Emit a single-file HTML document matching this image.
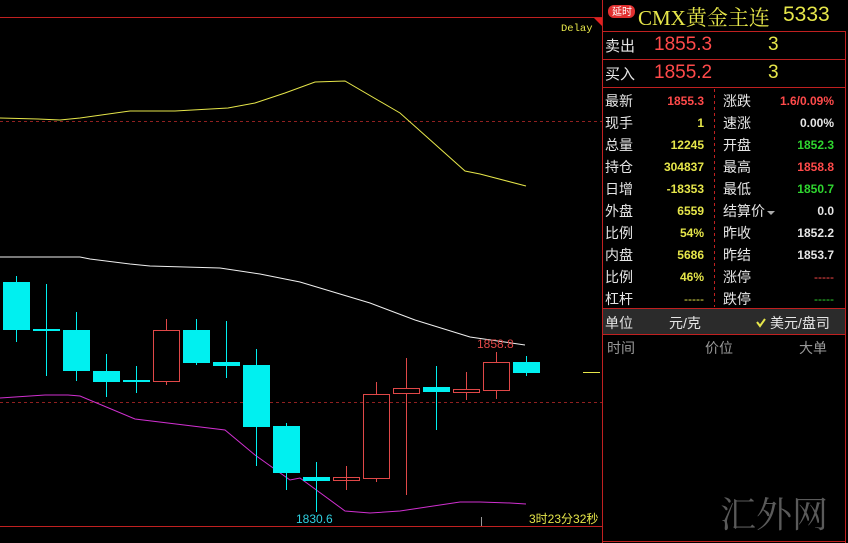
<!DOCTYPE html>
<html><head><meta charset="utf-8"><style>
body{margin:0;width:848px;height:543px;background:#000;overflow:hidden;position:relative;font-family:"Liberation Sans","Noto Sans CJK SC",sans-serif}
.a{position:absolute;white-space:nowrap}
.l{color:#e6e6e6;font-size:14px}
.v{font-size:12px;font-weight:bold;text-align:right}
.r{color:#ff4a4a}.y{color:#e6e64a}.g{color:#2fd62f}.w{color:#e6e6e6}
</style></head><body>
<svg class="a" style="left:0;top:0" width="848" height="543">
<line x1="0" y1="17.5" x2="602" y2="17.5" stroke="#c02020"/>
<polygon points="594,18 602,18 602,26" fill="#e02020"/>
<line x1="0" y1="121.5" x2="602" y2="121.5" stroke="#902020" stroke-dasharray="3,3"/>
<line x1="0" y1="402.5" x2="602" y2="402.5" stroke="#902020" stroke-dasharray="3,3"/>
<line x1="0" y1="526.5" x2="602" y2="526.5" stroke="#c02020"/>
<line x1="481.5" y1="517" x2="481.5" y2="526" stroke="#999"/>
<polyline fill="none" stroke="#e6e64a" points="0,118 38,119 60,120 80,118 130,111 175,111 228,108 255,103 285,93 315,82 345,81 400,113 465,171 480,174 526,186"/>
<polyline fill="none" stroke="#f0f0f0" points="0,257 30,257 80,257 90,259 130,264 150,266 220,268 240,271 260,274 300,282 330,291 370,303 415,320 470,337 525,345"/>
<polyline fill="none" stroke="#d030d0" points="0,398 45,395 68,395 80,396 135,419 225,430 255,455 290,480 300,478 345,511 370,513 400,511 460,502 480,502 510,503 526,504"/>
<g stroke="#00f0f0" fill="#00f0f0">
<line x1="16.5" y1="276" x2="16.5" y2="342"/><rect x="3" y="282" width="27" height="48" stroke="none"/>
<line x1="46.5" y1="284" x2="46.5" y2="376"/><rect x="33" y="329" width="27" height="2" stroke="none"/>
<line x1="76.5" y1="312" x2="76.5" y2="381"/><rect x="63" y="330" width="27" height="41" stroke="none"/>
<line x1="106.5" y1="354" x2="106.5" y2="397"/><rect x="93" y="371" width="27" height="11" stroke="none"/>
<line x1="136.5" y1="366" x2="136.5" y2="393"/><rect x="123" y="380" width="27" height="2" stroke="none"/>
<line x1="196.5" y1="319" x2="196.5" y2="365"/><rect x="183" y="330" width="27" height="33" stroke="none"/>
<line x1="226.5" y1="321" x2="226.5" y2="378"/><rect x="213" y="362" width="27" height="4" stroke="none"/>
<line x1="256.5" y1="349" x2="256.5" y2="466"/><rect x="243" y="365" width="27" height="62" stroke="none"/>
<line x1="286.5" y1="423" x2="286.5" y2="490"/><rect x="273" y="426" width="27" height="47" stroke="none"/>
<line x1="316.5" y1="462" x2="316.5" y2="512"/><rect x="303" y="477" width="27" height="4" stroke="none"/>
<line x1="436.5" y1="366" x2="436.5" y2="430"/><rect x="423" y="387" width="27" height="5" stroke="none"/>
<line x1="526.5" y1="356" x2="526.5" y2="376"/><rect x="513" y="362" width="27" height="11" stroke="none"/>
</g>
<g stroke="#e04848" fill="none">
<line x1="166.5" y1="319" x2="166.5" y2="330"/><line x1="166.5" y1="382" x2="166.5" y2="385"/><rect x="153.5" y="330.5" width="26" height="51"/>
<line x1="346.5" y1="466" x2="346.5" y2="490"/><rect x="333.5" y="477.5" width="26" height="3"/>
<line x1="376.5" y1="382" x2="376.5" y2="394"/><line x1="376.5" y1="478" x2="376.5" y2="482"/><rect x="363.5" y="394.5" width="26" height="84"/>
<line x1="406.5" y1="358" x2="406.5" y2="495"/><rect x="393.5" y="388.5" width="26" height="5" fill="#000"/>
<line x1="466.5" y1="372" x2="466.5" y2="400"/><rect x="453.5" y="389.5" width="26" height="3" fill="#000"/>
<line x1="496.5" y1="352" x2="496.5" y2="362"/><line x1="496.5" y1="390" x2="496.5" y2="399"/><rect x="483.5" y="362.5" width="26" height="28"/>
</g>
<line x1="583" y1="372.5" x2="600" y2="372.5" stroke="#e6e64a"/>
<text x="561" y="31" fill="#e6e64a" font-family="Liberation Mono" font-size="10.5">Delay</text>
<text x="477" y="348" fill="#e04848" font-size="12">1858.8</text>
<text x="296" y="523" fill="#30d0e0" font-size="12">1830.6</text>
<text x="529" y="523" fill="#e6e64a" font-size="12" font-family="Liberation Sans,Noto Sans CJK SC">3时23分32秒</text>
<rect x="603" y="309" width="242" height="25" fill="#2b2b2b"/>
<g stroke="#c02020">
<line x1="602.5" y1="0" x2="602.5" y2="543"/><line x1="845.5" y1="31" x2="845.5" y2="543"/>
<line x1="603" y1="31.5" x2="845" y2="31.5"/><line x1="603" y1="59.5" x2="845" y2="59.5"/>
<line x1="603" y1="87.5" x2="845" y2="87.5"/><line x1="603" y1="308.5" x2="845" y2="308.5"/>
<line x1="603" y1="334.5" x2="845" y2="334.5"/><line x1="603" y1="541.5" x2="845" y2="541.5"/>
<line x1="714.5" y1="89" x2="714.5" y2="307" stroke-dasharray="3,3"/>
</g>
<rect x="608" y="5" width="27" height="13" rx="6" fill="#e03030"/>
<text x="612" y="15" fill="#fff" font-size="10" font-family="Noto Sans CJK SC">延时</text>
<path d="M757 322 l3 4 l5 -7" stroke="#e6e64a" stroke-width="2" fill="none"/>
<path d="M767 211 h8 l-4 4z" fill="#aaa"/>
<text x="720" y="527" fill="#5a5a5a" font-size="36" font-family="Noto Serif CJK SC">汇外网</text>
</svg>
<div class="a y" style="left:638px;top:2px;font-size:21px;font-family:'Liberation Serif','Noto Serif CJK SC',serif">CMX黄金主连</div>
<div class="a y" style="left:783px;top:3px;font-size:21px">5333</div>
<div class="a l" style="left:605px;top:35px;font-size:15px">卖出</div>
<div class="a r" style="left:654px;top:34px;font-size:19px">1855.3</div>
<div class="a y" style="left:768px;top:34px;font-size:19px">3</div>
<div class="a l" style="left:605px;top:63px;font-size:15px">买入</div>
<div class="a r" style="left:654px;top:62px;font-size:19px">1855.2</div>
<div class="a y" style="left:768px;top:62px;font-size:19px">3</div>
<div class="a" style="left:605px;top:90px;line-height:22px">
<div class="l">最新</div><div class="l">现手</div><div class="l">总量</div><div class="l">持仓</div><div class="l">日增</div><div class="l">外盘</div><div class="l">比例</div><div class="l">内盘</div><div class="l">比例</div><div class="l">杠杆</div></div>
<div class="a v" style="left:640px;width:64px;top:90px;line-height:22px">
<div class="r">1855.3</div><div class="y">1</div><div class="y">12245</div><div class="y">304837</div><div class="y">-18353</div><div class="y">6559</div><div class="y">54%</div><div class="y">5686</div><div class="y">46%</div><div class="y" style="font-weight:normal">-----</div></div>
<div class="a" style="left:723px;top:90px;line-height:22px">
<div class="l">涨跌</div><div class="l">速涨</div><div class="l">开盘</div><div class="l">最高</div><div class="l">最低</div><div class="l">结算价</div><div class="l">昨收</div><div class="l">昨结</div><div class="l">涨停</div><div class="l">跌停</div></div>
<div class="a v" style="left:760px;width:74px;top:90px;line-height:22px">
<div class="r">1.6/0.09%</div><div class="w">0.00%</div><div class="g">1852.3</div><div class="r">1858.8</div><div class="g">1850.7</div><div class="w">0.0</div><div class="w">1852.2</div><div class="w">1853.7</div><div class="r" style="font-weight:normal">-----</div><div class="g" style="font-weight:normal">-----</div></div>
<div class="a l" style="left:605px;top:313px">单位</div>
<div class="a l" style="left:669px;top:313px">元/克</div>
<div class="a l" style="left:770px;top:313px">美元/盘司</div>
<div class="a" style="left:607px;top:338px;color:#999;font-size:14px">时间</div>
<div class="a" style="left:705px;top:338px;color:#999;font-size:14px">价位</div>
<div class="a" style="left:799px;top:338px;color:#999;font-size:14px">大单</div>
</body></html>
